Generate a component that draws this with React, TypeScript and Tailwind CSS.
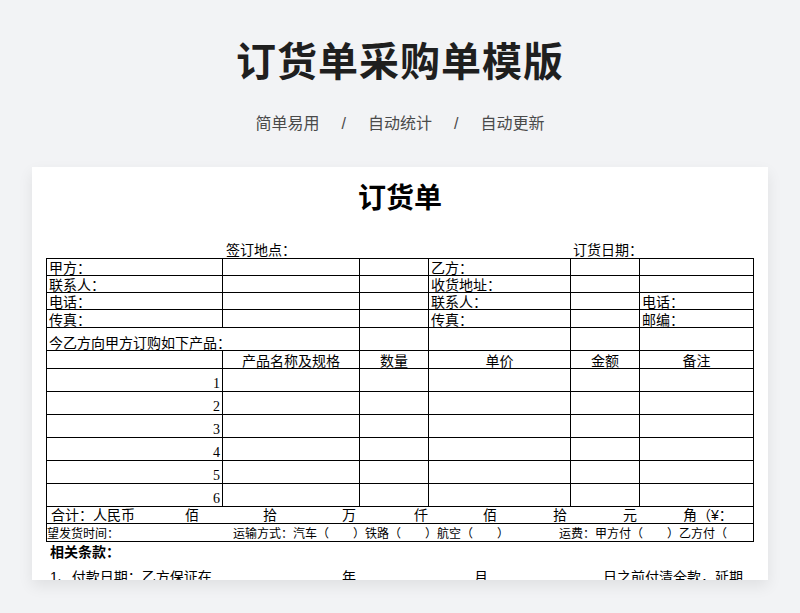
const cell = "border border-black px-[2px] py-0 align-bottom leading-none";

const rows = [1, 2, 3, 4, 5, 6];

export default function App() {
  return (
    <div
      className="w-[800px] h-[613px] bg-[#f2f3f5] flex flex-col items-center overflow-hidden"
      style={{ fontFamily: '"Liberation Sans", "Noto Sans CJK SC", sans-serif' }}
    >
      <h1 className="mt-[36px] h-[52px] text-[40px] font-bold leading-[52px] text-[#1f1f1f] tracking-[1px]">
        订货单采购单模版
      </h1>
      <div className="mt-[24px] flex gap-[22px] text-[16px] leading-[24px] text-[#4a4a4a]">
        <span>简单易用</span>
        <span>/</span>
        <span>自动统计</span>
        <span>/</span>
        <span>自动更新</span>
      </div>
      <div className="mt-[31px] w-[736px] h-[413px] bg-white shadow-[0_6px_14px_rgba(0,0,0,0.08)] overflow-hidden text-[14px] text-black">
        <div className="h-[58px] flex items-center justify-center text-[28px] font-semibold pt-[6px]">订货单</div>
        <div className="relative h-[33px]">
          <span className="absolute left-[194px] bottom-[1px] leading-none text-[14px]">签订地点：</span>
          <span className="absolute left-[541px] bottom-[1px] leading-none text-[14px]">订货日期：</span>
        </div>
        <table className="ml-[14px] border-collapse table-fixed w-[707px] text-[14px]">
          <colgroup>
            <col className="w-[176px]" />
            <col className="w-[137px]" />
            <col className="w-[69px]" />
            <col className="w-[142px]" />
            <col className="w-[69px]" />
            <col className="w-[114px]" />
          </colgroup>
          <tbody>
            <tr className="h-[17px]">
              <td className={cell}>甲方：</td><td className={cell}></td><td className={cell}></td>
              <td className={cell}>乙方：</td><td className={cell}></td><td className={cell}></td>
            </tr>
            <tr className="h-[17px]">
              <td className={cell}>联系人：</td><td className={cell}></td><td className={cell}></td>
              <td className={cell}>收货地址：</td><td className={cell}></td><td className={cell}></td>
            </tr>
            <tr className="h-[17px]">
              <td className={cell}>电话：</td><td className={cell}></td><td className={cell}></td>
              <td className={cell}>联系人：</td><td className={cell}></td><td className={cell}>电话：</td>
            </tr>
            <tr className="h-[18px]">
              <td className={cell}>传真：</td><td className={cell}></td><td className={cell}></td>
              <td className={cell}>传真：</td><td className={cell}></td><td className={cell}>邮编：</td>
            </tr>
            <tr className="h-[23px]">
              <td className={cell + " whitespace-nowrap"} colSpan={2}>今乙方向甲方订购如下产品：</td>
              <td className={cell}></td><td className={cell}></td><td className={cell}></td><td className={cell}></td>
            </tr>
            <tr className="h-[18px]">
              <td className={cell}></td>
              <td className={cell + " text-center"}>产品名称及规格</td>
              <td className={cell + " text-center"}>数量</td>
              <td className={cell + " text-center"}>单价</td>
              <td className={cell + " text-center"}>金额</td>
              <td className={cell + " text-center"}>备注</td>
            </tr>
            {rows.map((n) => (
              <tr key={n} className="h-[23px]">
                <td className={cell + " text-right"} style={{ fontFamily: '"Liberation Serif", serif' }}>{n}</td>
                <td className={cell}></td><td className={cell}></td><td className={cell}></td><td className={cell}></td><td className={cell}></td>
              </tr>
            ))}
            <tr className="h-[17px]">
              <td className={cell} colSpan={6}>
                <div className="relative h-[15px] whitespace-nowrap">
                  <span className="absolute left-[2px]">合计：人民币</span>
                  <span className="absolute left-[136px]">佰</span>
                  <span className="absolute left-[214px]">拾</span>
                  <span className="absolute left-[293px]">万</span>
                  <span className="absolute left-[365px]">仟</span>
                  <span className="absolute left-[434px]">佰</span>
                  <span className="absolute left-[504px]">拾</span>
                  <span className="absolute left-[574px]">元</span>
                  <span className="absolute left-[634px]">角（¥：</span>
                </div>
              </td>
            </tr>
            <tr className="h-[18px]">
              <td className={cell} colSpan={6}>
                <div className="relative h-[13px] whitespace-nowrap text-[12px]">
                  <span className="absolute left-[-2px]">望发货时间：</span>
                  <span className="absolute left-[184px]">运输方式：汽车（　　）铁路（　　）航空（　　）</span>
                  <span className="absolute left-[510px]">运费：甲方付（　　）乙方付（</span>
                </div>
              </td>
            </tr>
          </tbody>
        </table>
        <div className="ml-[18px] mt-[2px] text-[14px] font-bold leading-[17px]">相关条款：</div>
        <div className="relative ml-[18px] h-[16px] text-[14px] whitespace-nowrap">
          <span className="absolute left-0 top-[6px]">1、付款日期：乙方保证在</span>
          <span className="absolute left-[292px] top-[6px]">年</span>
          <span className="absolute left-[424px] top-[6px]">月</span>
          <span className="absolute left-[553px] top-[6px]">日之前付清全款，延期</span>
        </div>
      </div>
    </div>
  );
}
